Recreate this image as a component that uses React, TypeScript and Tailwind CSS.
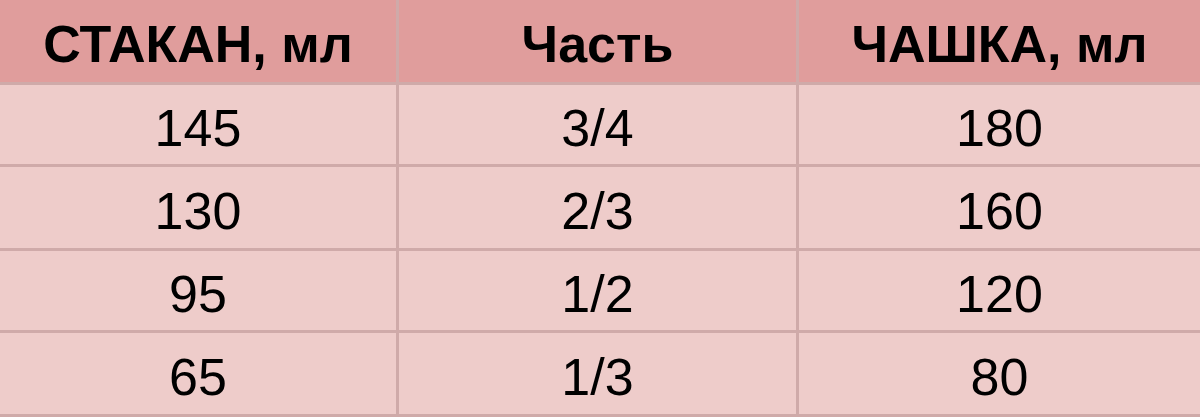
import * as React from "react"

const HEAD = ["СТАКАН, мл", "Часть", "ЧАШКА, мл"]

const ROWS = [
  ["145", "3/4", "180"],
  ["130", "2/3", "160"],
  ["95", "1/2", "120"],
  ["65", "1/3", "80"],
]

export default function App() {
  return (
    <div className="w-[1200px] h-[417px] bg-[#cfaaa9] overflow-hidden font-['Liberation_Sans',Arial,sans-serif] text-black">
      <div className="grid grid-cols-[396px_397px_401px] grid-rows-[82px_79px_81px_79px_81px] gap-[3px]">
        {HEAD.map((h) => (
          <div key={h} className="bg-[#e09d9c] flex items-center justify-center text-[52px] font-bold leading-none pt-[6px]">
            {h}
          </div>
        ))}
        {ROWS.flatMap((row, i) =>
          row.map((cell, j) => (
            <div key={`${i}-${j}`} className="bg-[#eeccca] flex items-center justify-center text-[52px] leading-none pt-[6px]">
              {cell}
            </div>
          )),
        )}
      </div>
    </div>
  )
}
